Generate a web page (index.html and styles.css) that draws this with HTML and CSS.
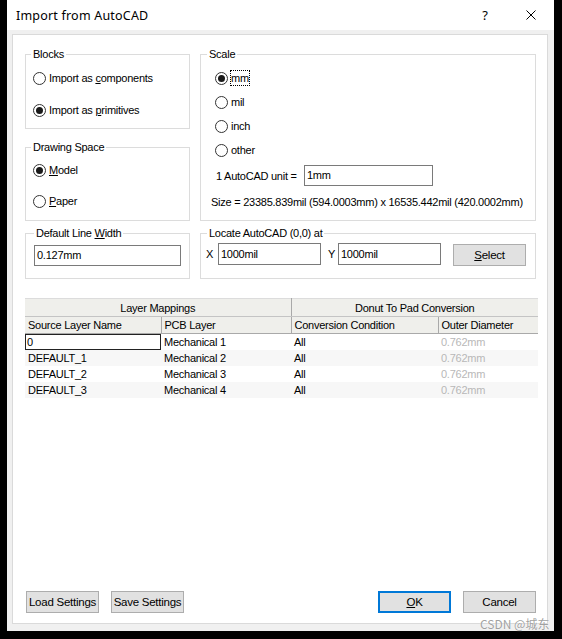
FILE: index.html
```html
<!DOCTYPE html>
<html>
<head>
<meta charset="utf-8">
<link rel="stylesheet" href="styles.css">
</head>
<body>
<div class="window">
  <div class="titlebar">
    <span class="title">Import from AutoCAD</span>
    <span class="cap-btn help">?</span>
    <span class="cap-btn close"><svg width="10" height="10" viewBox="0 0 10 10"><path d="M0.5 0.5 L9.5 9.5 M9.5 0.5 L0.5 9.5" stroke="#000" stroke-width="1" fill="none"/></svg></span>
  </div>
  <div class="client">
    <div class="panel">
      <div class="top">
        <div class="left">
          <div class="group g-blocks">
            <span class="gtitle">Blocks</span>
            <div class="radio-row r-first"><span class="radio"></span><span class="lbl">Import as <u>c</u>omponents</span></div>
            <div class="radio-row r-second"><span class="radio on"><span class="dot"></span></span><span class="lbl">Import as <u>p</u>rimitives</span></div>
          </div>
          <div class="group g-space">
            <span class="gtitle">Drawing Space</span>
            <div class="radio-row r-first"><span class="radio on"><span class="dot"></span></span><span class="lbl"><u>M</u>odel</span></div>
            <div class="radio-row r-second"><span class="radio"></span><span class="lbl"><u>P</u>aper</span></div>
          </div>
          <div class="group g-width">
            <span class="gtitle t-width">Default Line <u>W</u>idth</span>
            <div class="field f-width">0.127mm</div>
          </div>
        </div>
        <div class="right">
          <div class="group g-scale">
            <span class="gtitle t-scale">Scale</span>
            <div class="scale-list">
              <div class="radio-row"><span class="radio on"><span class="dot"></span></span><span class="lbl focus">mm</span></div>
              <div class="radio-row"><span class="radio"></span><span class="lbl">mil</span></div>
              <div class="radio-row"><span class="radio"></span><span class="lbl">inch</span></div>
              <div class="radio-row"><span class="radio"></span><span class="lbl">other</span></div>
            </div>
            <div class="unit-row"><span class="unit-lbl">1 AutoCAD unit =</span><div class="field f-unit">1mm</div></div>
            <div class="size">Size = 23385.839mil (594.0003mm) x 16535.442mil (420.0002mm)</div>
          </div>
          <div class="group g-locate">
            <span class="gtitle t-scale">Locate AutoCAD (0,0) at</span>
            <div class="locate-row">
              <span class="axis ax-x">X</span>
              <div class="field f-coord">1000mil</div>
              <span class="axis ax-y">Y</span>
              <div class="field f-coord">1000mil</div>
              <span class="btn btn-select"><u>S</u>elect</span>
            </div>
          </div>
        </div>
      </div>
      <table class="layers">
        <colgroup><col class="c1"><col class="c2"><col class="c3"><col class="c4"></colgroup>
        <thead>
          <tr class="h1"><th colspan="2">Layer Mappings</th><th colspan="2">Donut To Pad Conversion</th></tr>
          <tr class="h2"><th>Source Layer Name</th><th>PCB Layer</th><th>Conversion Condition</th><th>Outer Diameter</th></tr>
        </thead>
        <tbody>
          <tr><td class="editing">0</td><td>Mechanical 1</td><td>All</td><td class="dim">0.762mm</td></tr>
          <tr class="alt"><td>DEFAULT_1</td><td>Mechanical 2</td><td>All</td><td class="dim">0.762mm</td></tr>
          <tr><td>DEFAULT_2</td><td>Mechanical 3</td><td>All</td><td class="dim">0.762mm</td></tr>
          <tr class="alt"><td>DEFAULT_3</td><td>Mechanical 4</td><td>All</td><td class="dim">0.762mm</td></tr>
        </tbody>
      </table>
      <div class="buttons">
        <span class="btn">Load Settings</span>
        <span class="btn b-save">Save Settings</span>
        <span class="btn b-ok"><u>O</u>K</span>
        <span class="btn b-cancel">Cancel</span>
      </div>
    </div>
  </div>
  <div class="watermark">CSDN @城东</div>
</div>
</body>
</html>
```
FILE: styles.css
```css
html, body {
  margin: 0;
  padding: 0;
}
body {
  background: #000;
  width: 562px;
  height: 639px;
  overflow: hidden;
  font-family: "Liberation Sans", Arial, sans-serif;
  font-size: 11px;
  letter-spacing: -0.25px;
  color: #000;
}
u { text-decoration: underline; text-underline-offset: 1px; }

.window {
  margin-left: 7px;
  width: 547px;
  height: 631px;
  background: #f0f0f0;
  display: flex;
  flex-direction: column;
  position: relative;
}
.titlebar {
  height: 30px;
  flex: none;
  background: #fff;
  display: flex;
  align-items: center;
  padding-left: 9px;
  font-family: "Noto Sans", "Liberation Sans", sans-serif;
  font-size: 12.5px;
  letter-spacing: 0.2px;
}
.title { flex: 1; }
.cap-btn {
  width: 46px;
  height: 30px;
  display: flex;
  align-items: center;
  justify-content: center;
}
.help { font-size: 13px; letter-spacing: 0; }

.client {
  flex: 1;
  display: flex;
  padding: 4px 6px 7px 5px;
  min-height: 0;
}
.panel {
  flex: 1;
  min-width: 0;
  background: #fff;
  border: 1px solid #dadada;
  display: flex;
  flex-direction: column;
  padding: 19px 11px 10px 12px;
}
.top { display: flex; gap: 10px; }
.left { width: 165px; display: flex; flex-direction: column; }
.right { width: 336px; display: flex; flex-direction: column; }

.group {
  box-sizing: border-box;
  border: 1px solid #dcdcdc;
  display: flex;
  flex-direction: column;
  align-items: flex-start;
}
.gtitle {
  display: block;
  margin: -7px 0 0 5px;
  padding: 0 2px;
  line-height: 13px;
  background: #fff;
}
.t-width { margin-left: 8px; }
.t-scale { margin-left: 6px; }

.g-blocks { height: 75px; }
.g-space { height: 74px; margin-top: 18px; }
.g-width { height: 46px; margin-top: 12px; }
.g-scale { height: 167px; }
.g-locate { height: 46px; margin-top: 12px; }

.radio-row {
  display: flex;
  align-items: center;
  height: 16px;
  gap: 2px;
  margin-left: 7px;
}
.g-blocks .r-first { margin-top: 9px; }
.g-blocks .r-second { margin-top: 16px; }
.g-space .r-first { margin-top: 8px; }
.g-space .r-second { margin-top: 15px; }

.radio {
  box-sizing: border-box;
  width: 13px;
  height: 13px;
  border: 1px solid #333;
  border-radius: 50%;
  background: #fff;
  display: flex;
  align-items: center;
  justify-content: center;
}
.dot {
  width: 7px;
  height: 7px;
  border-radius: 50%;
  background: #1a1a1a;
}
.lbl {
  border: 1px dotted transparent;
  line-height: 14px;
}
.lbl.focus { border-color: #000; }

.scale-list {
  display: flex;
  flex-direction: column;
  gap: 8px;
  margin-top: 9px;
  margin-left: 7px;
}
.unit-row {
  display: flex;
  align-items: center;
  margin-top: 7px;
  margin-left: 15px;
}
.unit-lbl { width: 88px; }
.field {
  box-sizing: border-box;
  border: 1px solid #7a7a7a;
  background: #fff;
  height: 21px;
  line-height: 19px;
  padding-left: 2px;
}
.f-unit { width: 129px; }
.f-width { width: 147px; margin: 5px 0 0 8px; }
.size { margin: 10px 0 0 10px; line-height: 13px; }

.locate-row {
  display: flex;
  align-items: flex-start;
  margin-top: 3px;
  margin-left: 5px;
}
.axis { line-height: 22px; }
.ax-x { width: 12px; }
.ax-y { width: 10px; margin-left: 7px; }
.f-coord { width: 103px; height: 22px; line-height: 20px; }

.btn {
  box-sizing: border-box;
  width: 73px;
  height: 22px;
  background: #e1e1e1;
  border: 1px solid #adadad;
  display: flex;
  align-items: center;
  justify-content: center;
  font-size: 11.5px;
}
.btn-select { margin-left: 12px; margin-top: 1px; }

.layers {
  width: 513px;
  flex: none;
  margin-top: 19px;
  border-collapse: collapse;
  table-layout: fixed;
}
.c1 { width: 136px; }
.c2 { width: 130px; }
.c3 { width: 147px; }
.c4 { width: 100px; }
.layers th {
  font-weight: normal;
  background: #efefeb;
  padding: 0 0 0 3px;
  text-align: left;
  white-space: nowrap;
  border-right: 1px solid #a9a9a9;
  border-bottom: 1px solid #c4c4c4;
}
.layers th:last-child { border-right: none; }
.layers .h1 th {
  height: 17px;
  text-align: center;
  padding: 0;
  border-top: 1px solid #dcdcdc;
}
.layers .h2 th { height: 16px; border-bottom: 1px solid #a9a9a9; }
.layers td {
  height: 16px;
  padding: 0 0 0 3px;
  white-space: nowrap;
  line-height: 14px;
}
.layers tr.alt td { background: #f7f7f7; }
.layers td.editing {
  box-shadow: inset 0 0 0 1px #222;
  padding-left: 2px;
}
.layers td.dim { color: #b8b8b8; }

.buttons {
  margin-top: auto;
  display: flex;
  padding-left: 1px;
}
.b-save { margin-left: 12px; }
.b-ok {
  margin-left: auto;
  border: 2px solid #0078d7;
}
.b-cancel { margin-left: 12px; }

.watermark {
  position: absolute;
  left: 473px;
  top: 615px;
  font-family: "Noto Sans CJK SC", "Noto Sans", sans-serif;
  font-size: 12px;
  letter-spacing: 0;
  color: rgba(130, 130, 130, 0.75);
  text-shadow: 0 0 1px #fff;
}
```
